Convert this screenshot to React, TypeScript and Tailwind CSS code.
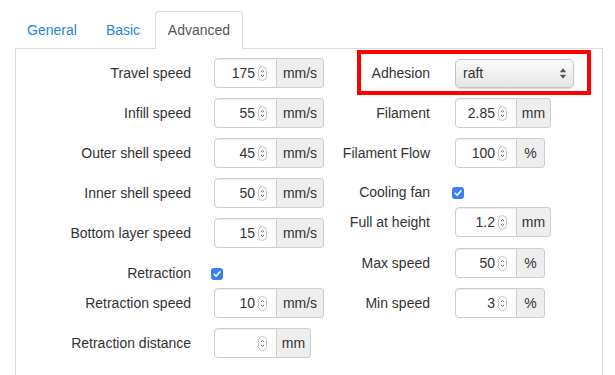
import React from 'react';

const font = { fontFamily: '"Liberation Sans", Arial, sans-serif' };

const Spinner = () => (
  <svg width="9" height="15" viewBox="0 0 9 15" className="shrink-0">
    <rect x="0.5" y="0.5" width="8" height="14" rx="4" fill="#fff" stroke="#c6c6c6" />
    <path d="M2.9 6.1 L4.5 4.4 L6.1 6.1" fill="none" stroke="#6b6b6b" strokeWidth="1" />
    <path d="M2.9 8.9 L4.5 10.6 L6.1 8.9" fill="none" stroke="#6b6b6b" strokeWidth="1" />
  </svg>
);

const Check = () => (
  <svg width="12" height="12" viewBox="0 0 12 12" className="shrink-0">
    <rect x="0" y="0" width="12" height="12" rx="3" fill="#3b7ff5" />
    <path d="M3.2 6.3 L5.1 8.2 L8.9 3.9" fill="none" stroke="#fff" strokeWidth="1.6" strokeLinecap="round" strokeLinejoin="round" />
  </svg>
);

interface FieldProps {
  value: string;
  unit: string;
  inputW: string;
  unitW: string;
}

const NumberField: React.FC<FieldProps> = ({ value, unit, inputW, unitW }) => (
  <div className="flex h-[30px]">
    <div className={`${inputW} flex items-center justify-end gap-[3px] rounded-l-[4px] border border-[#ccc] bg-white pr-[9px] text-[14px] text-[#333] shadow-[inset_0_1px_1px_rgba(0,0,0,0.075)]`}>
      <span>{value}</span>
      <Spinner />
    </div>
    <div className={`${unitW} flex items-center justify-center rounded-r-[4px] border border-l-0 border-[#ccc] bg-[#eee] text-[14px] text-[#333]`}>
      {unit}
    </div>
  </div>
);

const LeftRow: React.FC<{ label: string; children: React.ReactNode; className?: string }> = ({ label, children, className }) => (
  <div className={`flex items-center ${className ?? ''}`}>
    <div className="w-[175px] text-right text-[14px] text-[#333]">{label}</div>
    <div className="ml-[23px]">{children}</div>
  </div>
);

const RightRow: React.FC<{ label: string; children: React.ReactNode; className?: string }> = ({ label, children, className }) => (
  <div className={`relative flex items-center ${className ?? ''}`}>
    <div className="w-[90px] text-right text-[14px] text-[#333]">{label}</div>
    <div className="ml-[25px]">{children}</div>
  </div>
);

const Select = () => (
  <div className="flex h-[29px] w-[119px] items-center justify-between rounded-[5px] border border-[#c4c4c4] bg-gradient-to-b from-[#fbfbfb] to-[#e6e6e6] pl-[7px] pr-[6px] text-[14px] text-[#333] shadow-[0_1px_1px_rgba(0,0,0,0.15)]">
    <span>raft</span>
    <svg width="8" height="13" viewBox="0 0 8 13">
      <path d="M0.8 5.2 L4 1.2 L7.2 5.2 Z" fill="#555" />
      <path d="M0.8 7.8 L4 11.8 L7.2 7.8 Z" fill="#555" />
    </svg>
  </div>
);

export default function App() {
  return (
    <div className="h-[375px] w-[615px] overflow-hidden bg-white pt-[11px]" style={font}>
      <div className="ml-[13px] flex text-[14px]">
        <div className="flex h-[37px] w-[78px] items-center justify-center pt-[2px] text-[#1b87d6]">General</div>
        <div className="flex h-[37px] w-[64px] items-center justify-center pt-[2px] text-[#1b87d6]">Basic</div>
        <div className="relative z-10 -mb-px flex h-[38px] w-[88px] items-center justify-center rounded-t-[4px] border border-b-0 border-[#ddd] bg-white pb-px text-[#555]">
          Advanced
        </div>
      </div>
      <div className="ml-[15px] mr-[12px] flex h-[340px] border border-[#ddd] pt-[9px]">
        <div className="flex w-[324px] flex-col">
          <LeftRow label="Travel speed" className="mb-[10px]">
            <NumberField value="175" unit="mm/s" inputW="w-[63px]" unitW="w-[47px]" />
          </LeftRow>
          <LeftRow label="Infill speed" className="mb-[10px]">
            <NumberField value="55" unit="mm/s" inputW="w-[63px]" unitW="w-[47px]" />
          </LeftRow>
          <LeftRow label="Outer shell speed" className="mb-[10px]">
            <NumberField value="45" unit="mm/s" inputW="w-[63px]" unitW="w-[47px]" />
          </LeftRow>
          <LeftRow label="Inner shell speed" className="mb-[10px]">
            <NumberField value="50" unit="mm/s" inputW="w-[63px]" unitW="w-[47px]" />
          </LeftRow>
          <LeftRow label="Bottom layer speed" className="mb-[10px]">
            <NumberField value="15" unit="mm/s" inputW="w-[63px]" unitW="w-[47px]" />
          </LeftRow>
          <div className="flex h-[30px] items-center pt-[1px]">
            <div className="w-[175px] text-right text-[14px] text-[#333]">Retraction</div>
            <div className="ml-[20px] flex">
              <Check />
            </div>
          </div>
          <LeftRow label="Retraction speed" className="mb-[10px]">
            <NumberField value="10" unit="mm/s" inputW="w-[63px]" unitW="w-[47px]" />
          </LeftRow>
          <LeftRow label="Retraction distance">
            <NumberField value="" unit="mm" inputW="w-[63px]" unitW="w-[34px]" />
          </LeftRow>
        </div>
        <div className="flex flex-col">
          <RightRow label="Adhesion" className="mb-[10px] h-[30px]">
            <Select />
            <span className="pointer-events-none absolute left-[17px] top-[-8px] h-[45px] w-[234px] border-4 border-[#ff0000]" />
          </RightRow>
          <RightRow label="Filament" className="mb-[10px]">
            <NumberField value="2.85" unit="mm" inputW="w-[62px]" unitW="w-[34px]" />
          </RightRow>
          <RightRow label="Filament Flow" className="mb-[10px]">
            <NumberField value="100" unit="%" inputW="w-[62px]" unitW="w-[28px]" />
          </RightRow>
          <div className="flex h-[29px] items-center">
            <div className="w-[90px] text-right text-[14px] text-[#333]">Cooling fan</div>
            <div className="ml-[22px] flex">
              <Check />
            </div>
          </div>
          <RightRow label="Full at height" className="mb-[11px]">
            <NumberField value="1.2" unit="mm" inputW="w-[62px]" unitW="w-[34px]" />
          </RightRow>
          <RightRow label="Max speed" className="mb-[10px]">
            <NumberField value="50" unit="%" inputW="w-[62px]" unitW="w-[28px]" />
          </RightRow>
          <RightRow label="Min speed">
            <NumberField value="3" unit="%" inputW="w-[62px]" unitW="w-[28px]" />
          </RightRow>
        </div>
      </div>
    </div>
  );
}
